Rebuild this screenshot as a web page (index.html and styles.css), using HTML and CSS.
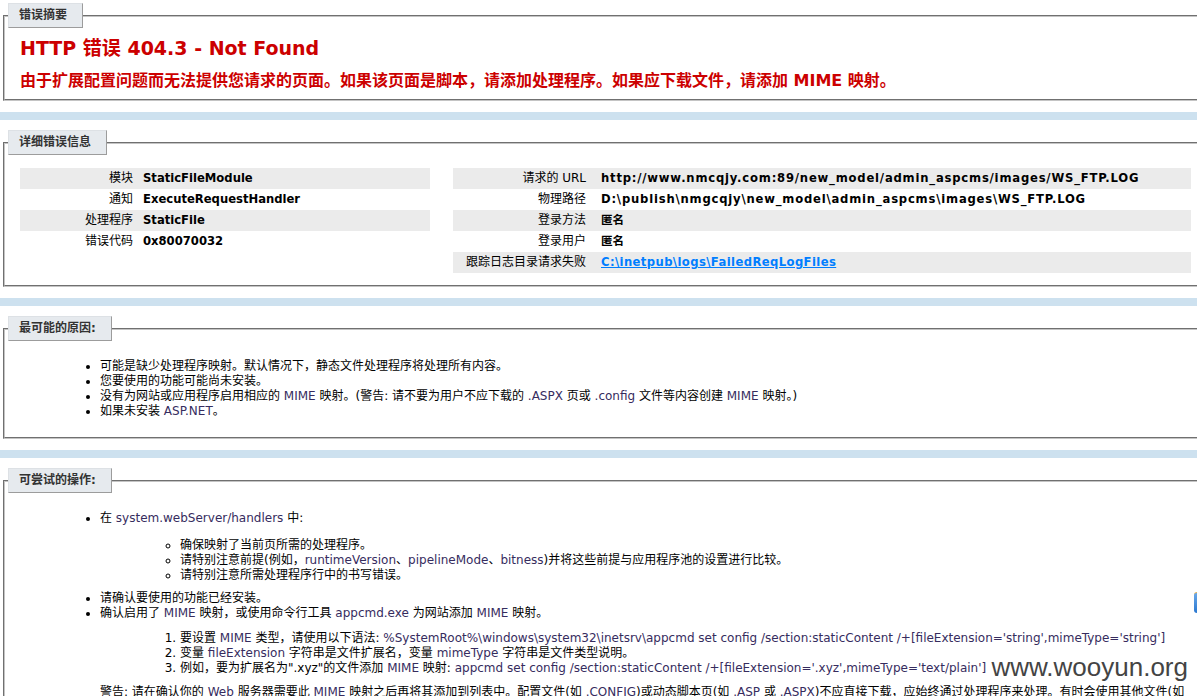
FILE: index.html
```html
<!DOCTYPE html>
<html lang="zh-CN">
<head>
  <meta charset="UTF-8" />
  <title>IIS 7.5 详细错误 - 404.3 - Not Found</title>
  <link rel="stylesheet" href="styles.css">
</head>
<body>
  <div class="page">
    <fieldset class="box">
      <legend>错误摘要</legend>
      <h2>HTTP 错误 404.3 - Not Found</h2>
      <h3>由于扩展配置问题而无法提供您请求的页面。如果该页面是脚本，请添加处理程序。如果应下载文件，请添加 MIME 映射。</h3>
    </fieldset>

    <div class="band"></div>

    <fieldset class="box">
      <legend>详细错误信息</legend>
      <div class="details">
        <table class="details-left">
          <tr class="alt"><th>模块</th><td>StaticFileModule</td></tr>
          <tr><th>通知</th><td>ExecuteRequestHandler</td></tr>
          <tr class="alt"><th>处理程序</th><td>StaticFile</td></tr>
          <tr><th>错误代码</th><td>0x80070032</td></tr>
        </table>
        <table class="details-right">
          <tr class="alt"><th>请求的 URL</th><td class="path">http://www.nmcqjy.com:89/new_model/admin_aspcms/images/WS_FTP.LOG</td></tr>
          <tr><th>物理路径</th><td class="path">D:\publish\nmgcqjy\new_model\admin_aspcms\images\WS_FTP.LOG</td></tr>
          <tr class="alt"><th>登录方法</th><td>匿名</td></tr>
          <tr><th>登录用户</th><td>匿名</td></tr>
          <tr class="alt"><th>跟踪日志目录请求失败</th><td><a href="#">C:\inetpub\logs\FailedReqLogFiles</a></td></tr>
        </table>
      </div>
    </fieldset>

    <div class="band"></div>

    <fieldset class="box">
      <legend>最可能的原因:</legend>
      <ul class="list">
        <li>可能是缺少处理程序映射。默认情况下，静态文件处理程序将处理所有内容。</li>
        <li>您要使用的功能可能尚未安装。</li>
        <li>没有为网站或应用程序启用相应的 <span class="en">MIME</span> 映射。(警告: 请不要为用户不应下载的 <span class="en">.ASPX</span> 页或 <span class="en">.config</span> 文件等内容创建 <span class="en">MIME</span> 映射。)</li>
        <li>如果未安装 <span class="en">ASP.NET</span>。</li>
      </ul>
    </fieldset>

    <div class="band"></div>

    <fieldset class="box last">
      <legend>可尝试的操作:</legend>
      <ul class="list">
        <li>在 <span class="en">system.webServer/handlers</span> 中:
          <ul class="sub">
            <li>确保映射了当前页所需的处理程序。</li>
            <li>请特别注意前提(例如，<span class="en">runtimeVersion</span>、<span class="en">pipelineMode</span>、<span class="en">bitness</span>)并将这些前提与应用程序池的设置进行比较。</li>
            <li>请特别注意所需处理程序行中的书写错误。</li>
          </ul>
        </li>
        <li>请确认要使用的功能已经安装。</li>
        <li>确认启用了 <span class="en">MIME</span> 映射，或使用命令行工具 <span class="en">appcmd.exe</span> 为网站添加 <span class="en">MIME</span> 映射。
          <ol class="steps">
            <li>要设置 <span class="en">MIME</span> 类型，请使用以下语法: <span class="en">%SystemRoot%\windows\system32\inetsrv\appcmd set config /section:staticContent /+[fileExtension='string',mimeType='string']</span></li>
            <li>变量 <span class="en">fileExtension</span> 字符串是文件扩展名，变量 <span class="en">mimeType</span> 字符串是文件类型说明。</li>
            <li>例如，要为扩展名为".xyz"的文件添加 <span class="en">MIME</span> 映射: <span class="en">appcmd set config /section:staticContent /+[fileExtension='.xyz',mimeType='text/plain']</span></li>
          </ol>
          <p class="warn">警告: 请在确认你的 <span class="en">Web</span> 服务器需要此 <span class="en">MIME</span> 映射之后再将其添加到列表中。配置文件(如 <span class="en">.CONFIG</span>)或动态脚本页(如 <span class="en">.ASP</span> 或 <span class="en">.ASPX</span>)不应直接下载，应始终通过处理程序来处理。有时会使用其他文件(如</p>
        </li>
      </ul>
    </fieldset>
  </div>

  <div class="watermark">www.wooyun.org</div>
  <div class="side-tab"></div>
</body>
</html>
```

FILE: styles.css
```css
    html, body {
      margin: 0;
      overflow: hidden;
      background: #fff;
    }
    body {
      font-family: "DejaVu Sans", "Noto Sans CJK SC", sans-serif;
      font-size: 12px;
      line-height: 15px;
      color: #000;
      height: 696px;
      position: relative;
    }
    .page {
      padding-top: 3px;
      width: 1240px;
    }
    .box {
      margin: 0 0 0 3px;
      padding: 0 15px 8px 15px;
      width: 1171px;
      border: 2px groove #c4c4c4;
      min-width: 0;
    }
    .box legend {
      margin-left: -12px;
      padding: 4px 15px 4px 10px;
      background: #e6eaee;
      border: 1px solid;
      border-color: #dde1e5 #9c9c9c #9c9c9c #dde1e5;
      color: #333;
      font-weight: bold;
      font-size: 12px;
      line-height: 15px;
    }
    .band {
      height: 8px;
      margin: 11px 0 10px;
      background: #cde1ef;
    }
    h2 {
      margin: 8px 0 0;
      font-size: 19px;
      line-height: 24px;
      color: #cc0000;
    }
    h3 {
      margin: 11px 0 0;
      font-size: 16px;
      line-height: 20px;
      color: #cc0000;
    }
    .details {
      display: grid;
      grid-template-columns: 410px 738px;
      column-gap: 23px;
      align-items: start;
      margin: 13px 0 4px;
    }
    table {
      width: 100%;
      border-collapse: collapse;
      border-spacing: 0;
    }
    th, td {
      padding: 3px 0;
      line-height: 15px;
      vertical-align: top;
      text-align: left;
    }
    th {
      font-weight: normal;
      text-align: right;
      white-space: nowrap;
    }
    td {
      font-weight: bold;
      font-size: 11.6px;
      white-space: nowrap;
    }
    td.path {
      letter-spacing: 0.8px;
    }
    .details-left th {
      width: 113px;
      padding-right: 10px;
    }
    .details-right th {
      width: 133px;
      padding-right: 15px;
    }
    tr.alt th, tr.alt td {
      background: #ebebeb;
    }
    a {
      color: #007eff;
      font-weight: bold;
      letter-spacing: 0.4px;
    }
    .list {
      margin: 18px 0 10px;
      padding-left: 80px;
    }
    .list li {
      line-height: 15px;
    }
    .sub {
      list-style: circle;
      margin: 12px 0 8px;
      padding-left: 80px;
    }
    .steps {
      margin: 10px 0 9px;
      padding-left: 80px;
    }
    .en {
      color: #362c5e;
    }
    .warn {
      margin: 0;
      white-space: nowrap;
      overflow: hidden;
    }
    .watermark {
      position: absolute;
      right: 9px;
      top: 652px;
      font-family: "Liberation Sans", sans-serif;
      font-size: 26px;
      line-height: 30px;
      color: #444;
    }
    .side-tab {
      position: absolute;
      right: 0;
      top: 592px;
      width: 3px;
      height: 20px;
      border-top: 1px solid #e8b050;
      border-radius: 3px 0 0 3px;
      background: linear-gradient(#6aa8e8, #2a78d0);
    }
```
